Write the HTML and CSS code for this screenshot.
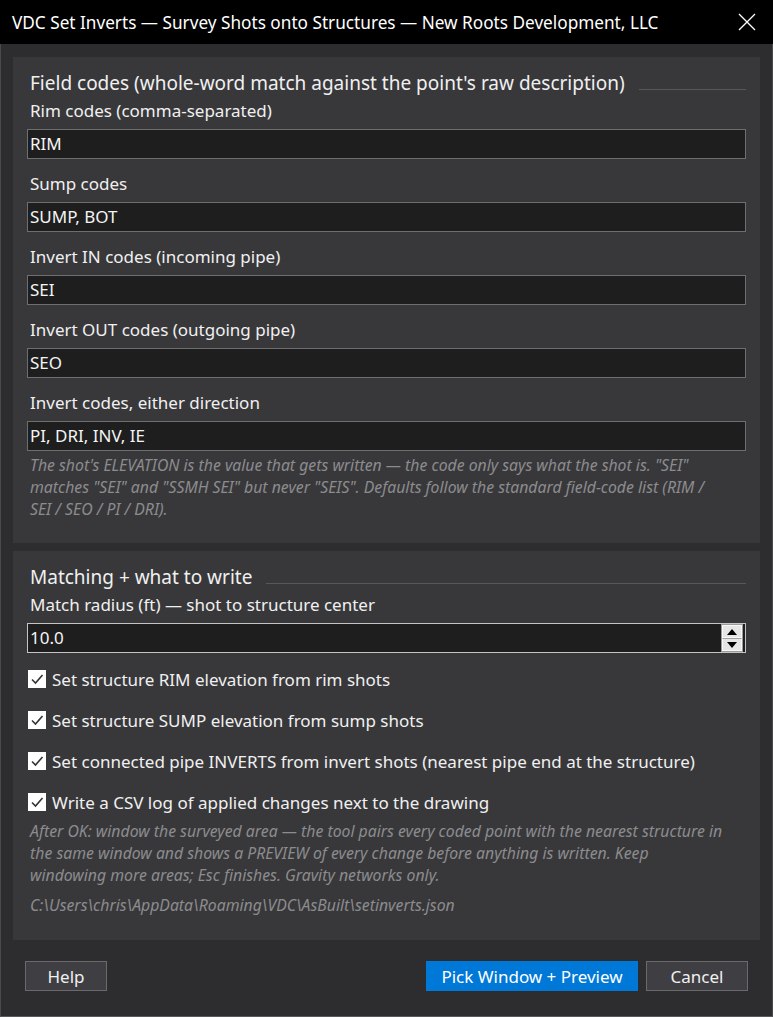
FILE: index.html
```html
<!DOCTYPE html>
<html>
<head>
<meta charset="utf-8">
<link rel="stylesheet" href="styles.css">
</head>
<body>
<div class="window">
  <div class="titlebar">
    <span class="title">VDC Set Inverts — Survey Shots onto Structures — New Roots Development, LLC</span>
    <svg class="close" width="18" height="18" viewBox="0 0 18 18"><path d="M1 1 L17 17 M17 1 L1 17" stroke="#ffffff" stroke-width="1.3" fill="none"/></svg>
  </div>
  <div class="body">
    <section class="group g1">
      <div class="legend"><span>Field codes (whole-word match against the point's raw description)</span><i class="rule"></i></div>
      <div class="field first">
        <div class="label">Rim codes (comma-separated)</div>
        <div class="input">RIM</div>
      </div>
      <div class="field">
        <div class="label">Sump codes</div>
        <div class="input">SUMP, BOT</div>
      </div>
      <div class="field">
        <div class="label">Invert IN codes (incoming pipe)</div>
        <div class="input">SEI</div>
      </div>
      <div class="field">
        <div class="label">Invert OUT codes (outgoing pipe)</div>
        <div class="input">SEO</div>
      </div>
      <div class="field">
        <div class="label">Invert codes, either direction</div>
        <div class="input">PI, DRI, INV, IE</div>
      </div>
      <p class="hint h1">The shot's ELEVATION is the value that gets written — the code only says what the shot is. "SEI"<br>matches "SEI" and "SSMH SEI" but never "SEIS". Defaults follow the standard field-code list (RIM /<br>SEI / SEO / PI / DRI).</p>
    </section>
    <section class="group g2">
      <div class="legend"><span>Matching + what to write</span><i class="rule"></i></div>
      <div class="field first">
        <div class="label">Match radius (ft) — shot to structure center</div>
        <div class="input spin"><span>10.0</span>
          <div class="spinbtns">
            <div class="sb"><svg width="10" height="6" viewBox="0 0 10 6"><path d="M5 0 L10 6 L0 6 Z" fill="#000"/></svg></div>
            <div class="sb"><svg width="10" height="6" viewBox="0 0 10 6"><path d="M0 0 L10 0 L5 6 Z" fill="#000"/></svg></div>
          </div>
        </div>
      </div>
      <div class="checks">
        <label class="check"><span class="box"><svg width="14" height="14" viewBox="0 0 14 14"><path d="M2 7.5 L5.5 11 L12.5 3" stroke="#333" stroke-width="1.6" fill="none"/></svg></span>Set structure RIM elevation from rim shots</label>
        <label class="check"><span class="box"><svg width="14" height="14" viewBox="0 0 14 14"><path d="M2 7.5 L5.5 11 L12.5 3" stroke="#333" stroke-width="1.6" fill="none"/></svg></span>Set structure SUMP elevation from sump shots</label>
        <label class="check"><span class="box"><svg width="14" height="14" viewBox="0 0 14 14"><path d="M2 7.5 L5.5 11 L12.5 3" stroke="#333" stroke-width="1.6" fill="none"/></svg></span>Set connected pipe INVERTS from invert shots (nearest pipe end at the structure)</label>
        <label class="check"><span class="box"><svg width="14" height="14" viewBox="0 0 14 14"><path d="M2 7.5 L5.5 11 L12.5 3" stroke="#333" stroke-width="1.6" fill="none"/></svg></span>Write a CSV log of applied changes next to the drawing</label>
      </div>
      <p class="hint h2">After OK: window the surveyed area — the tool pairs every coded point with the nearest structure in<br>the same window and shows a PREVIEW of every change before anything is written. Keep<br>windowing more areas; Esc finishes. Gravity networks only.</p>
      <p class="hint path">C:\Users\chris\AppData\Roaming\VDC\AsBuilt\setinverts.json</p>
    </section>
    <div class="footer">
      <button class="btn help">Help</button>
      <span class="spacer"></span>
      <button class="btn primary">Pick Window + Preview</button>
      <button class="btn cancel">Cancel</button>
    </div>
  </div>
</div>
</body>
</html>
```
FILE: styles.css
```css
html, body {
  margin: 0;
  padding: 0;
  background: #2d2d30;
}
body {
  font-family: "Segoe UI", "Noto Sans", "Open Sans", sans-serif;
  color: #f0f0f0;
}
.window {
  width: 773px;
  height: 1017px;
  box-sizing: border-box;
  display: flex;
  flex-direction: column;
  overflow: hidden;
}
.titlebar {
  height: 44px;
  background: #000;
  display: flex;
  align-items: center;
  padding: 0 16px 0 12px;
  flex: none;
}
.title {
  font-size: 17.2px;
  color: #ffffff;
  flex: 1;
  white-space: nowrap;
}
.close {
  margin-right: 1px;
}
.body {
  flex: 1;
  border-left: 1px solid #4a4a4c;
  border-right: 1px solid #4a4a4c;
  border-bottom: 1px solid #5a5a5c;
  padding: 13px 12px 0 12px;
  display: flex;
  flex-direction: column;
}
.group {
  background: #38383b;
  padding: 13px 14px 0 14px;
}
.g1 {
  height: 486px;
  box-sizing: border-box;
}
.g2 {
  margin-top: 8px;
  height: 389px;
  box-sizing: border-box;
}
.legend {
  display: flex;
  align-items: center;
  height: 26px;
  font-size: 19px;
  color: #f0f0f0;
  padding-left: 3px;
}
.legend span {
  white-space: nowrap;
}
.rule {
  flex: 1;
  height: 1px;
  background: #58585b;
  margin-left: 14px;
  margin-top: 12px;
}
.field {
  margin-top: 14px;
}
.field.first {
  margin-top: 4px;
}
.label {
  font-size: 17px;
  line-height: 22px;
  height: 22px;
  padding-left: 3px;
  color: #f0f0f0;
  margin-bottom: 7px;
  white-space: nowrap;
}
.input {
  height: 30px;
  box-sizing: border-box;
  border: 1px solid #6e6e70;
  background: #1e1e1e;
  color: #f4f4f4;
  font-size: 17px;
  line-height: 28px;
  padding-left: 2px;
  display: flex;
  align-items: center;
}
.input.spin {
  border-color: #c4c4c4;
  justify-content: space-between;
  padding-right: 2px;
}
.spinbtns {
  display: flex;
  flex-direction: column;
  width: 22px;
  height: 28px;
  background: #f0f0f0;
  box-sizing: border-box;
  border: 1px solid #9a9a9a;
}
.sb {
  flex: 1;
  display: flex;
  align-items: center;
  justify-content: center;
  background: #e6e6e6;
  border: 1px solid #f8f8f8;
  box-sizing: border-box;
}
.sb + .sb {
  border-top: 1px solid #a0a0a0;
}
.hint {
  margin: 3px 0 0 0;
  font-style: italic;
  font-size: 15.8px;
  line-height: 22px;
  color: #8c8c8e;
  padding-left: 3px;
  white-space: nowrap;
}
.checks {
  margin-top: 15px;
  display: flex;
  flex-direction: column;
  gap: 19px;
}
.check {
  display: flex;
  align-items: center;
  height: 22px;
  font-size: 17px;
  color: #f0f0f0;
  white-space: nowrap;
}
.box {
  width: 18px;
  height: 18px;
  background: #ffffff;
  margin-left: 1px;
  margin-right: 6px;
  display: flex;
  align-items: center;
  justify-content: center;
  flex: none;
}
.hint.h2 {
  margin-top: 7px;
}
.hint.path {
  margin-top: 8px;
}
.footer {
  display: flex;
  align-items: center;
  margin-top: 21px;
  padding-left: 12px;
  padding-right: 12px;
  gap: 8px;
}
.spacer {
  flex: 1;
}
.btn {
  height: 30px;
  box-sizing: border-box;
  font-family: inherit;
  font-size: 17px;
  color: #f0f0f0;
  background: #3f3f43;
  border: 1px solid #6a6a6c;
  padding: 0;
}
.help {
  width: 82px;
}
.primary {
  width: 212px;
  background: #0078d7;
  border-color: #0078d7;
  color: #ffffff;
}
.cancel {
  width: 102px;
}
```
